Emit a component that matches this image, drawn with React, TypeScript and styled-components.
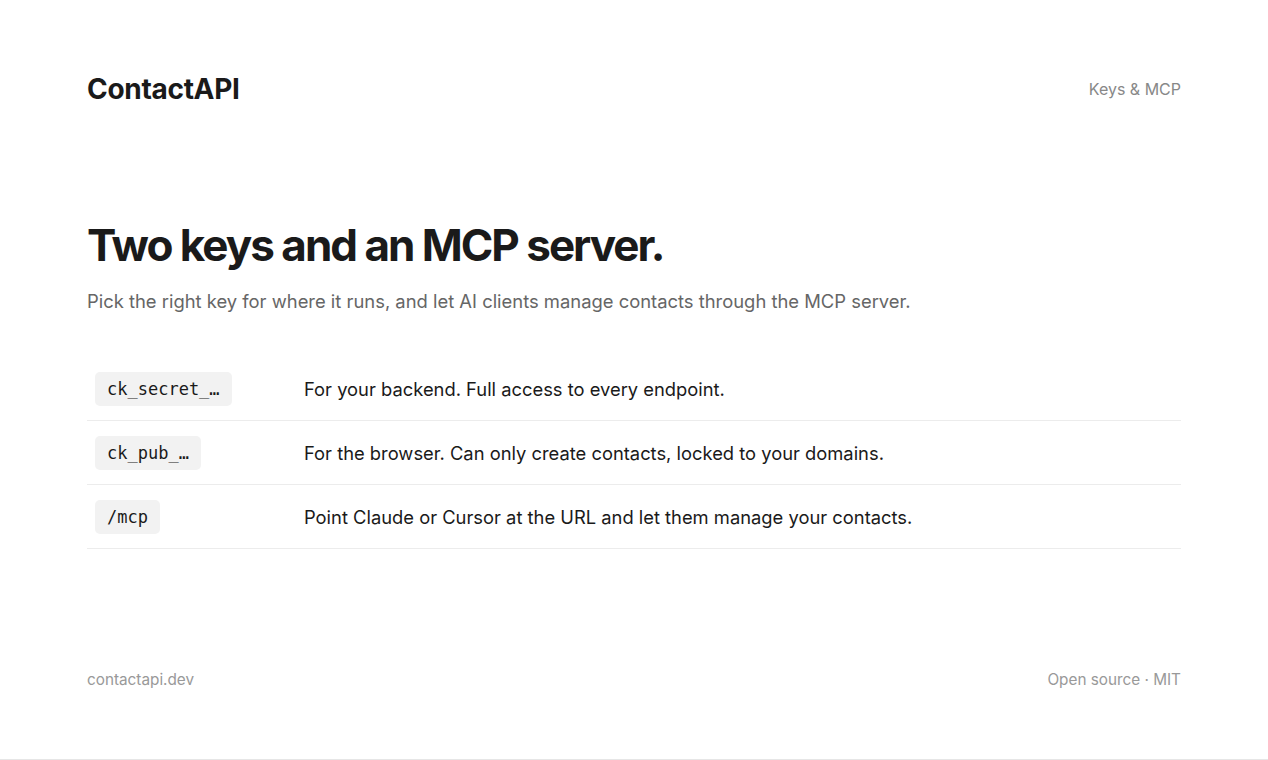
import styled, { createGlobalStyle } from 'styled-components';

const GlobalStyle = createGlobalStyle`
    * { box-sizing: border-box; }
    html, body {
        margin: 0;
        padding: 0;
        background: #ffffff;
        font-family: Inter, "Noto Sans", "Liberation Sans", sans-serif;
        color: #1a1a1a;
        -webkit-font-smoothing: antialiased;
    }
`;

const Page = styled.div`
    min-height: 760px;
    display: flex;
    flex-direction: column;
    border-bottom: 1px solid #e6e6e6;
`;

const Wrap = styled.div`
    width: 1094px;
    margin: 0 auto;
    flex: 1;
    display: flex;
    flex-direction: column;
`;

const Header = styled.header`
    display: flex;
    justify-content: space-between;
    align-items: center;
    height: 60px;
    margin-top: 59px;
`;

const Brand = styled.div`
    font-size: 28px;
    font-weight: 700;
    letter-spacing: -0.3px;
`;

const NavLink = styled.a`
    font-size: 16px;
    color: #888888;
    text-decoration: none;
`;

const Hero = styled.section`
    margin-top: 99px;
`;

const Title = styled.h1`
    margin: 0;
    font-size: 44px;
    font-weight: 700;
    letter-spacing: -2px;
    line-height: 54px;
`;

const Lead = styled.p`
    margin: 15px 0 0;
    font-size: 18.4px;
    color: #666666;
    line-height: 28px;
`;

const Table = styled.div`
    margin-top: 42px;
    display: flex;
    flex-direction: column;
`;

const Row = styled.div`
    display: grid;
    grid-template-columns: 209px 1fr;
    align-items: center;
    height: 64px;
    padding: 0 8px;
    border-bottom: 1px solid #ececec;
`;

const Code = styled.code`
    justify-self: start;
    display: inline-block;
    font-family: "DejaVu Sans Mono", "Liberation Mono", monospace;
    font-size: 17px;
    line-height: 22px;
    padding: 6px 12px;
    background: #f2f2f2;
    border-radius: 5px;
    color: #1a1a1a;
`;

const Desc = styled.span`
    font-size: 18.35px;
    color: #1a1a1a;
`;

const Footer = styled.footer`
    margin-top: auto;
    margin-bottom: 70px;
    display: flex;
    justify-content: space-between;
    font-size: 15.3px;
    color: #999999;
`;

const keys = [
    { code: 'ck_secret_…', text: 'For your backend. Full access to every endpoint.' },
    { code: 'ck_pub_…', text: 'For the browser. Can only create contacts, locked to your domains.' },
    { code: '/mcp', text: 'Point Claude or Cursor at the URL and let them manage your contacts.' },
];

export default function App() {
    return (
        <Page>
            <GlobalStyle />
            <Wrap>
                <Header>
                    <Brand>ContactAPI</Brand>
                    <NavLink href="#">Keys &amp; MCP</NavLink>
                </Header>
                <Hero>
                    <Title>Two keys and an MCP server.</Title>
                    <Lead>Pick the right key for where it runs, and let AI clients manage contacts through the MCP server.</Lead>
                </Hero>
                <Table>
                    {keys.map((k) => (
                        <Row key={k.code}>
                            <div><Code>{k.code}</Code></div>
                            <Desc>{k.text}</Desc>
                        </Row>
                    ))}
                </Table>
                <Footer>
                    <span>contactapi.dev</span>
                    <span>Open source · MIT</span>
                </Footer>
            </Wrap>
        </Page>
    );
}
